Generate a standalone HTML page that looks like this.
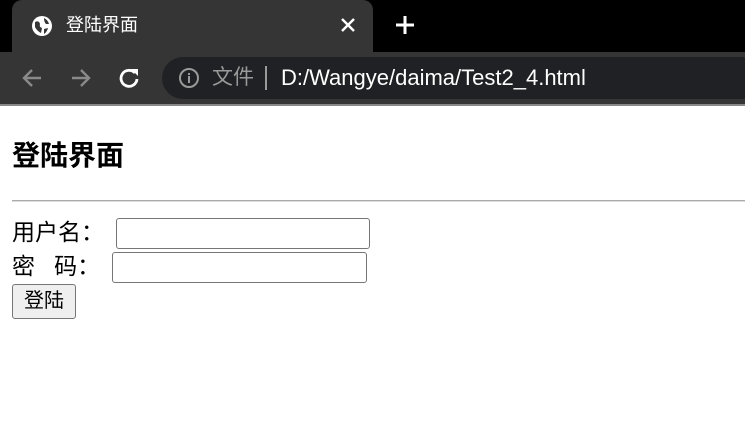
<!DOCTYPE html>
<html><head><meta charset="utf-8"><style>
body{margin:0;width:745px;height:421px;overflow:hidden;background:#fff;font-family:"Liberation Sans","Noto Sans CJK SC",sans-serif;position:relative}
.a{position:absolute;line-height:1}
</style></head><body>
<div class="a" style="left:0;top:0;width:745px;height:52px;background:#000"></div>
<div class="a" style="left:12px;top:0;width:361px;height:52px;background:#353535;border-radius:10px 10px 0 0"></div>
<svg class="a" style="left:31px;top:15px" width="22" height="22" viewBox="0 0 22 22"><circle cx="11" cy="11" r="10" fill="#fff"/><path d="M4 7 Q8 5 9 9 Q8 12 11 13 L10 18 Q6 16 4 12Z M13 3 Q17 5 18 9 L15 9 Q13 7 13 3Z M13 14 L17 13 Q16 17 13 19Z" fill="#353535"/></svg>
<div class="a" style="left:66px;top:16px;color:#fff;font-size:18px">登陆界面</div>
<svg class="a" style="left:340px;top:17px" width="16" height="16" viewBox="0 0 16 16"><path d="M2 2L14 14M14 2L2 14" stroke="#fff" stroke-width="2.4"/></svg>
<svg class="a" style="left:395px;top:15px" width="20" height="20" viewBox="0 0 20 20"><path d="M10 1V19M1 10H19" stroke="#fff" stroke-width="3"/></svg>
<div class="a" style="left:0;top:52px;width:745px;height:52px;background:#353535"></div>
<svg class="a" style="left:21px;top:67px" width="22" height="22" viewBox="0 0 22 22"><path d="M20 11H3M11 3L3 11L11 19" stroke="#8a8a8a" stroke-width="2.4" fill="none"/></svg>
<svg class="a" style="left:70px;top:67px" width="22" height="22" viewBox="0 0 22 22"><path d="M2 11H19M11 3L19 11L11 19" stroke="#8a8a8a" stroke-width="2.4" fill="none"/></svg>
<svg class="a" style="left:118px;top:67px" width="22" height="22" viewBox="0 0 22 22"><path d="M17 6A8 8 0 1 0 19 12" stroke="#fff" stroke-width="2.8" fill="none"/><path d="M13 2H20V9Z" fill="#fff"/></svg>
<div class="a" style="left:162px;top:57px;width:600px;height:42px;background:#202124;border-radius:21px"></div>
<svg class="a" style="left:178px;top:67px" width="22" height="22" viewBox="0 0 22 22"><circle cx="11" cy="11" r="9" fill="none" stroke="#9a9a9a" stroke-width="2"/><rect x="10" y="9" width="2" height="7" fill="#9a9a9a"/><rect x="10" y="6" width="2" height="2" fill="#9a9a9a"/></svg>
<div class="a" style="left:212px;top:67px;color:#9a9a9a;font-size:21px">文件</div>
<div class="a" style="left:265px;top:66px;width:2px;height:24px;background:#9a9a9a"></div>
<div class="a" style="left:281px;top:67px;color:#fff;font-size:22px">D:/Wangye/daima/Test2_4.html</div>
<div class="a" style="left:0;top:104px;width:745px;height:2px;background:#888"></div>
<div class="a" style="left:12px;top:142px;font-size:28px;font-weight:bold">登陆界面</div>
<div class="a" style="left:12px;top:200px;width:733px;height:1px;background:#aaa;border-bottom:1px solid #ddd"></div>
<div class="a" style="left:12px;top:221px;font-size:23px">用户名：</div>
<div class="a" style="left:116px;top:218px;width:252px;height:29px;border:1px solid #767676;border-radius:3px"></div>
<div class="a" style="left:12px;top:255px;font-size:23px">密&nbsp;&nbsp;&nbsp;码：</div>
<div class="a" style="left:112px;top:252px;width:253px;height:29px;border:1px solid #767676;border-radius:3px"></div>
<div class="a" style="left:12px;top:284px;width:62px;height:33px;border:1px solid #767676;border-radius:3px;background:#efefef;font-size:20px;text-align:center;line-height:33px">登陆</div>
</body></html>
